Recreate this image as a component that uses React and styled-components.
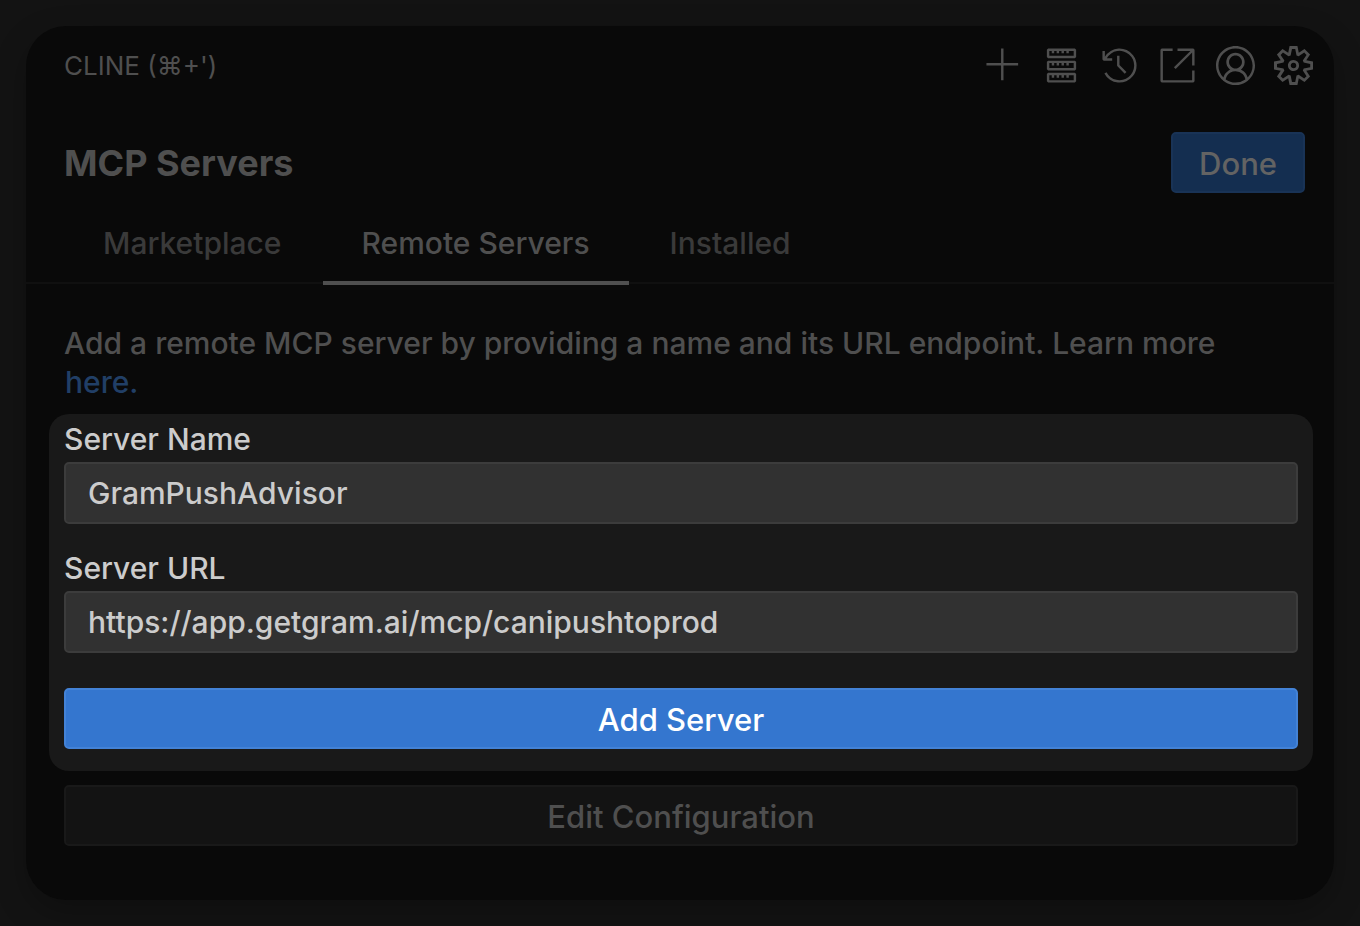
import React, { useState } from "react";
import styled, { createGlobalStyle } from "styled-components";
import {
  VscAdd,
  VscServer,
  VscHistory,
  VscLinkExternal,
  VscAccount,
  VscSettingsGear,
} from "react-icons/vsc";

const GlobalStyle = createGlobalStyle`
  *, *::before, *::after { box-sizing: border-box; }
  body {
    margin: 0;
    background: #131313;
    color: #4f4f4f;
    font-family: Inter, "Liberation Sans", sans-serif;
    font-size: 30px;
    font-weight: 500;
    line-height: 38px;
  }
  button, input { font: inherit; }
`;

const Page = styled.div`
  min-height: 100vh;
  padding: 26px;
`;

const Panel = styled.main`
  padding-bottom: 54px;
  border-radius: 40px;
  background: #090909;
  box-shadow: 0 12px 32px rgba(0, 0, 0, 0.25);
`;

const PanelHeader = styled.header`
  display: flex;
  align-items: center;
  justify-content: space-between;
  padding: 20px 21px 20px 38px;
`;

const PanelLabel = styled.span`
  font-size: 26px;
  font-weight: 400;
  line-height: 39px;
`;

const Toolbar = styled.div`
  display: flex;
  gap: 19px;
`;

const IconButton = styled.button`
  display: flex;
  padding: 0;
  border: 0;
  background: none;
  color: #4f4f4f;
  font-size: 39px;
  cursor: pointer;
`;

const TitleRow = styled.div`
  display: flex;
  align-items: center;
  justify-content: space-between;
  padding: 27px 29px 12px 38px;
`;

const Title = styled.h1`
  margin: 0;
  font-size: 36px;
  font-weight: 700;
  line-height: 40px;
  color: #4f4f4f;
`;

const variants = {
  primary: { background: "#3476cf", border: "#4382d6", color: "#ffffff" },
  dimmed: { background: "#142e50", border: "#193356", color: "#636363" },
  secondary: { background: "#131313", border: "#191919", color: "#4f4f4f" },
};

const Button = styled.button`
  width: ${(p) => (p.$block ? "100%" : "auto")};
  height: 61px;
  padding: 2px 26px 0;
  border: 2px solid ${(p) => variants[p.$variant].border};
  border-radius: 5px;
  background: ${(p) => variants[p.$variant].background};
  color: ${(p) => variants[p.$variant].color};
  font-size: 31px;
  cursor: pointer;
`;

const TabList = styled.div`
  display: flex;
  gap: 2px;
  padding: 0 38px;
  border-bottom: 2px solid #101010;
`;

const Tab = styled.button`
  margin-bottom: -3px;
  padding: 19px 39px;
  border: 0;
  border-bottom: 4px solid ${(p) => (p.$active ? "#4f4f4f" : "transparent")};
  background: none;
  color: ${(p) => (p.$active ? "#4f4f4f" : "#3a3a3a")};
  cursor: pointer;
`;

const Description = styled.p`
  margin: 0;
  padding: 40px 36px 12px 38px;
  line-height: 39px;
`;

const Link = styled.a`
  padding: 0 1px;
  color: #213f66;
  text-decoration: none;
`;

const ServerForm = styled.form`
  display: flex;
  flex-direction: column;
  margin: 0 21px 14px 23px;
  padding: 6px 15px 22px;
  border-radius: 20px;
  background: #191919;
`;

const Field = styled.div`
  display: flex;
  flex-direction: column;
  gap: 4px;
  margin-bottom: ${(p) => (p.$last ? "35px" : "25px")};
  color: #cccccc;
`;

const TextInput = styled.input`
  width: 100%;
  height: 62px;
  padding: 0 22px;
  border: 2px solid #3c3c3c;
  border-radius: 5px;
  outline: none;
  background: #313131;
  color: #cccccc;
`;

const Footer = styled.footer`
  padding: 0 36px 0 38px;
`;

const actions = [
  { label: "New Task", Icon: VscAdd },
  { label: "MCP Servers", Icon: VscServer },
  { label: "History", Icon: VscHistory },
  { label: "Open in Editor", Icon: VscLinkExternal },
  { label: "Account", Icon: VscAccount },
  { label: "Settings", Icon: VscSettingsGear },
];

const tabs = ["Marketplace", "Remote Servers", "Installed"];

export default function App() {
  const [tab, setTab] = useState("Remote Servers");
  const [name, setName] = useState("GramPushAdvisor");
  const [url, setUrl] = useState("https://app.getgram.ai/mcp/canipushtoprod");

  return (
    <>
      <GlobalStyle />
      <Page>
        <Panel>
          <PanelHeader>
            <PanelLabel>CLINE (⌘+')</PanelLabel>
            <Toolbar>
              {actions.map(({ label, Icon }) => (
                <IconButton key={label} type="button" aria-label={label}>
                  <Icon />
                </IconButton>
              ))}
            </Toolbar>
          </PanelHeader>
          <TitleRow>
            <Title>MCP Servers</Title>
            <Button type="button" $variant="dimmed">Done</Button>
          </TitleRow>
          <TabList role="tablist">
            {tabs.map((t) => (
              <Tab
                key={t}
                type="button"
                role="tab"
                aria-selected={t === tab}
                $active={t === tab}
                onClick={() => setTab(t)}
              >
                {t}
              </Tab>
            ))}
          </TabList>
          <Description>
            Add a remote MCP server by providing a name and its URL endpoint. Learn more{" "}
            <Link href="#docs">here.</Link>
          </Description>
          <ServerForm onSubmit={(e) => e.preventDefault()}>
            <Field>
              <label htmlFor="server-name">Server Name</label>
              <TextInput
                id="server-name"
                type="text"
                value={name}
                onChange={(e) => setName(e.target.value)}
              />
            </Field>
            <Field $last>
              <label htmlFor="server-url">Server URL</label>
              <TextInput
                id="server-url"
                type="text"
                value={url}
                onChange={(e) => setUrl(e.target.value)}
              />
            </Field>
            <Button type="submit" $variant="primary" $block>Add Server</Button>
          </ServerForm>
          <Footer>
            <Button type="button" $variant="secondary" $block>Edit Configuration</Button>
          </Footer>
        </Panel>
      </Page>
    </>
  );
}
